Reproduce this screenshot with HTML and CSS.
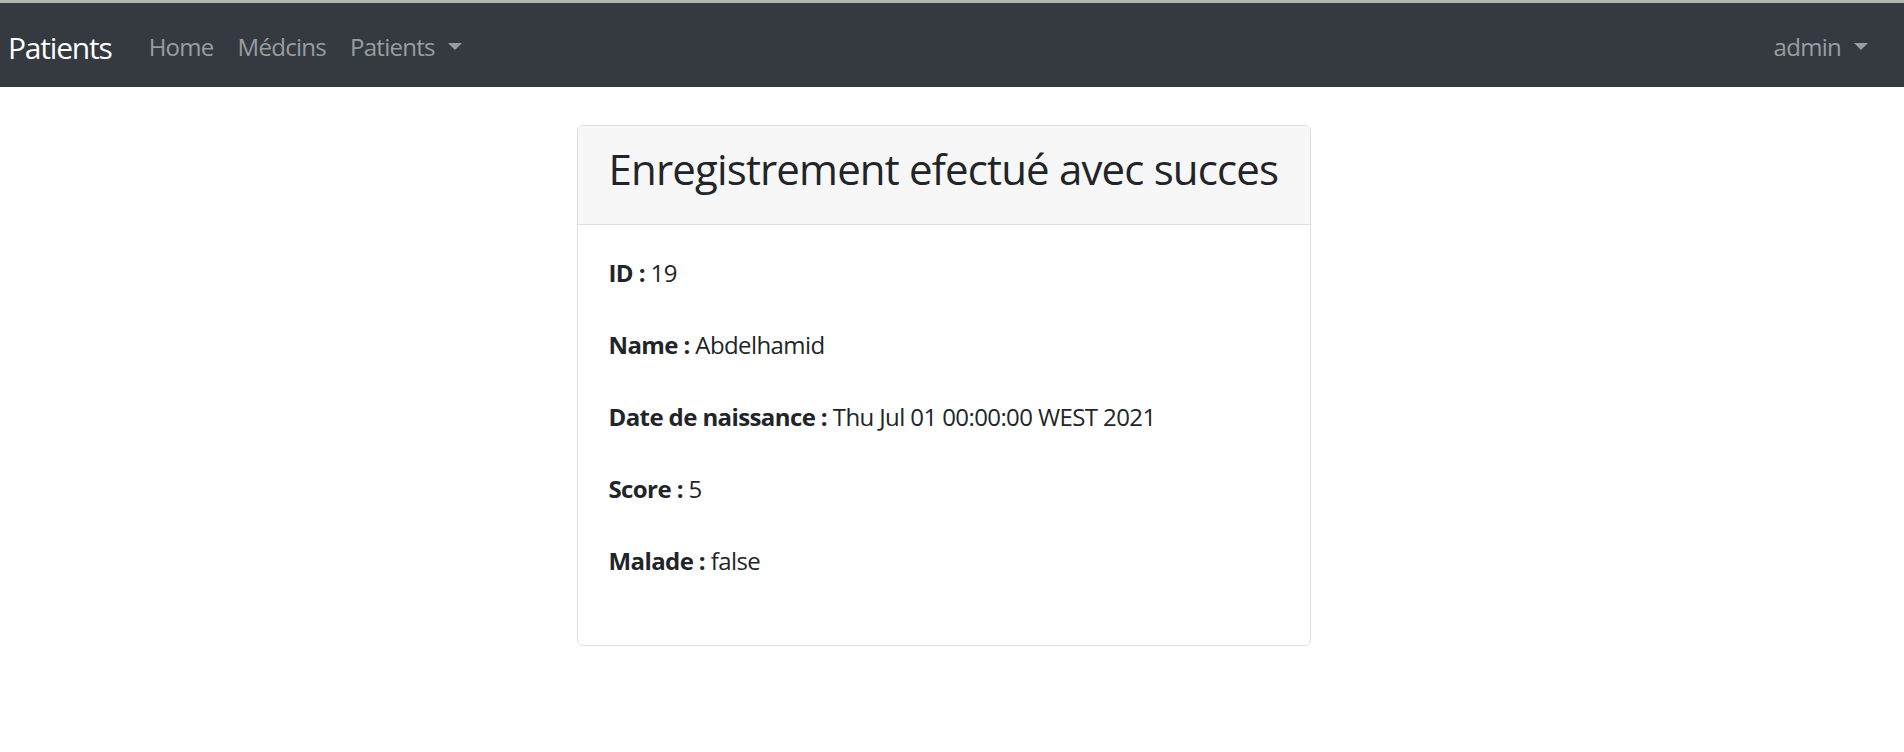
FILE: index.html
```html
<!DOCTYPE html>
<html lang="fr">
<head>
<meta charset="utf-8">
<title>Patients</title>
<link rel="stylesheet" href="styles.css">
</head>
<body>
<div class="topline"></div>
<nav class="navbar">
  <a class="brand" href="#">Patients</a>
  <ul class="nav">
    <li><a class="nav-link" href="#">Home</a></li>
    <li><a class="nav-link" href="#">Médcins</a></li>
    <li><a class="nav-link dropdown" href="#">Patients</a></li>
  </ul>
  <ul class="nav nav-right">
    <li><a class="nav-link dropdown" href="#">admin</a></li>
  </ul>
</nav>
<main class="main">
  <section class="card">
    <div class="card-header">
      <h3 class="card-title">Enregistrement efectué avec succes</h3>
    </div>
    <div class="card-body">
      <p><b>ID :</b> 19</p>
      <p><b>Name :</b> Abdelhamid</p>
      <p><b>Date de naissance :</b> Thu Jul 01 00:00:00 WEST 2021</p>
      <p><b>Score :</b> 5</p>
      <p><b>Malade :</b> false</p>
    </div>
  </section>
</main>
</body>
</html>
```

FILE: styles.css
```css
html, body {
  margin: 0;
  padding: 0;
  background: #fff;
}
body {
  font-family: "Open Sans", "Noto Sans", sans-serif;
  color: #212529;
  font-size: 24px;
  line-height: 36px;
  letter-spacing: -0.025em;
}
.topline {
  height: 3px;
  background: #b4b4b4;
}
.navbar {
  height: 84px;
  box-sizing: border-box;
  padding: 4px 24px 0 8px;
  background: #343a40;
  display: flex;
  align-items: center;
}
.brand {
  color: #fff;
  text-decoration: none;
  font-size: 30px;
  line-height: 45px;
  margin-right: 25px;
  letter-spacing: -0.04em;
}
.nav {
  list-style: none;
  margin: 0;
  padding: 0;
  display: flex;
}
.nav-right {
  margin-left: auto;
}
.nav-link {
  display: block;
  padding: 0 12px;
  color: rgba(255, 255, 255, 0.5);
  text-decoration: none;
  font-size: 24px;
  line-height: 36px;
  letter-spacing: -0.03em;
}
.dropdown::after {
  content: "";
  display: inline-block;
  margin-left: 13px;
  vertical-align: 6px;
  border-top: 7px solid;
  border-left: 7px solid transparent;
  border-right: 7px solid transparent;
}
.main {
  display: flex;
  justify-content: center;
  padding: 38px 17px 0 0;
}
.card {
  width: 734px;
  box-sizing: border-box;
  border: 1px solid #dfdfdf;
  border-radius: 6px;
  overflow: hidden;
}
.card-header {
  background: #f7f7f7;
  border-bottom: 1px solid #dfdfdf;
  padding: 18px 31px;
}
.card-title {
  margin: 0 0 12px;
  font-size: 42px;
  line-height: 50px;
  font-weight: 500;
  letter-spacing: -0.02em;
  white-space: nowrap;
}
.card-body {
  padding: 30px 31px;
}
.card-body p {
  margin: 0 0 36px;
}
.card-body b {
  font-weight: 700;
}
```
